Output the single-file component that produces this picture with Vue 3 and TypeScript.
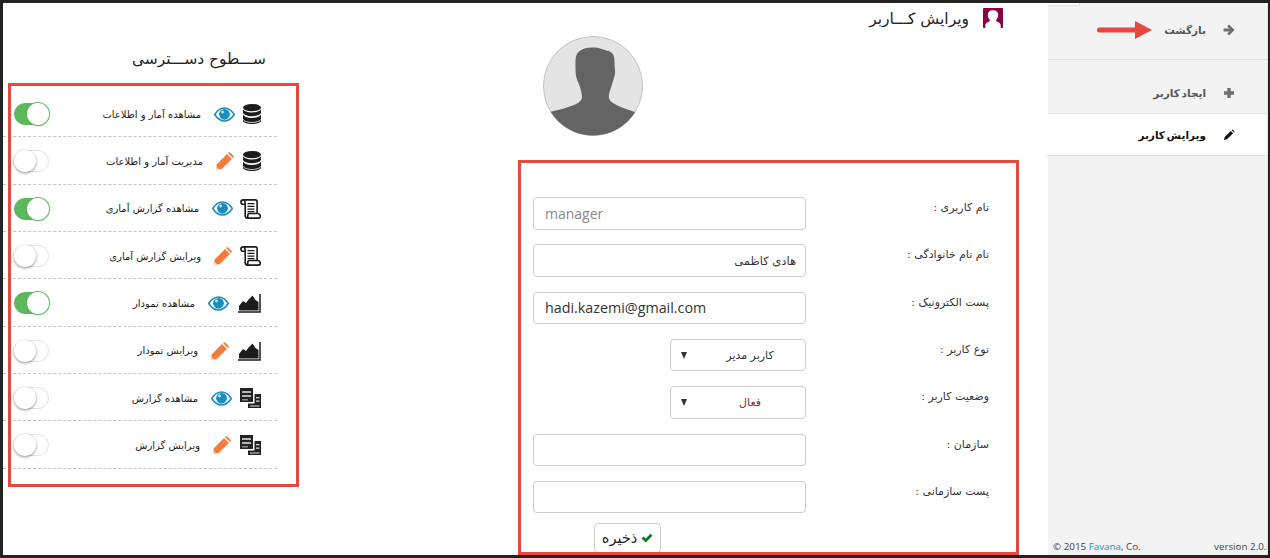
<script setup lang="ts">
type Act = 'view' | 'edit'
type Res = 'db' | 'scroll' | 'chart' | 'files'
interface Perm { label: string; act: Act; res: Res; on: boolean; gap: number }

const perms: Perm[] = [
  { label: 'مشاهده آمار و اطلاعات', act: 'view', res: 'db', on: true, gap: 8 },
  { label: 'مدیریت آمار و اطلاعات', act: 'edit', res: 'db', on: false, gap: 9 },
  { label: 'مشاهده گزارش آماری', act: 'view', res: 'scroll', on: true, gap: 7 },
  { label: 'ویرایش گزارش آماری', act: 'edit', res: 'scroll', on: false, gap: 8 },
  { label: 'مشاهده تمودار', act: 'view', res: 'chart', on: true, gap: 9 },
  { label: 'ویرایش تمودار', act: 'edit', res: 'chart', on: false, gap: 9 },
  { label: 'مشاهده گزارش', act: 'view', res: 'files', on: false, gap: 8 },
  { label: 'ویرایش گزارش', act: 'edit', res: 'files', on: false, gap: 9 },
]
</script>

<template>
  <div class="frame" dir="rtl">
    <aside class="side">
      <div class="tab"></div>
      <a class="nav nav-back">
        <svg class="nav-ico" viewBox="0 0 12 12"><path d="M6 .6 11.600 6 6 11.400 4.200 9.600 6.500 7.600H.5V4.400h6L4.200 2.400z" fill="#6f6f6f"/></svg>
        <span>بازگشت</span>
      </a>
      <a class="nav nav-new">
        <svg class="nav-ico" viewBox="0 0 12 12"><path d="M4.300 1h3.400v3.300H11v3.400H7.700V11H4.300V7.700H1V4.300h3.300z" fill="#6f6f6f"/></svg>
        <span>ایجاد کاربر</span>
      </a>
      <a class="nav nav-active">
        <svg class="nav-ico" viewBox="0 0 12 12"><path d="M1 11l.7-3L7.800 1.900 10.100 4.200 4 10.300zM8.600 1.100l.9-.7 2.100 2.100-.7.900z" fill="#111"/></svg>
        <span>ویرایش کاربر</span>
      </a>
      <div class="side-foot" dir="ltr">
        <span>© 2015 <em>Favana</em>, Co.</span>
        <span class="ver">version 2.0.8</span>
      </div>
    </aside>

    <main class="main">
      <header class="title">
        <svg class="title-ico" viewBox="0 0 20 20">
          <rect width="20" height="20" rx="1" fill="#8a0045"/>
          <path d="M10 2.200c3.400 0 5.200 1.900 5.200 4.900 0 2.100-.9 3.800-2 4.900-.3 1.100.6 1.700 2 2.300 1.600.6 2.500 1.900 2.500 3.400v2.300H2.300v-2.300c0-1.500.9-2.800 2.500-3.400 1.400-.6 2.300-1.200 2-2.300-1.100-1.100-2-2.800-2-4.900 0-3 1.800-4.900 5.200-4.900z" fill="#fff"/>
        </svg>
        <h1>ویرایش کـــاربر</h1>
      </header>

      <svg class="avatar" viewBox="0 0 100 100">
        <defs><clipPath id="av"><circle cx="50" cy="50" r="49.500"/></clipPath></defs>
        <circle cx="50" cy="50" r="49.500" fill="#e4e4e4" stroke="#c2c2c2"/>
        <path clip-path="url(#av)" d="M50 11.400C58 11.400 60 14 66 15 71 17 71.500 22 71.500 27 71.500 32 72.500 36 72 38 70.500 44 69 48 67.500 53 65 60 65 64 70 67 76 71 84 73 92 76L100 100H0L7 76C14 74 24 72 31 69 36 67 39 64 39 61 38.500 55 37 50 35 46 33 41 32.500 38 32.500 32 32.500 24 32 19 36 15.500 40 12 45 11.400 50 11.400z" fill="#646464"/>
      </svg>

      <form class="form" @submit.prevent>
        <label class="row"><span class="lab">نام کاربری :</span>
          <input class="ctl ltr muted" dir="ltr" value="manager" readonly /></label>
        <label class="row"><span class="lab">نام نام خانوادگی :</span>
          <input class="ctl" value="هادی کاظمی" /></label>
        <label class="row"><span class="lab">پست الکترونیک :</span>
          <input class="ctl ltr" dir="ltr" value="hadi.kazemi@gmail.com" /></label>
        <label class="row"><span class="lab">نوع کاربر :</span>
          <span class="sel"><select class="ctl short"><option>کاربر مدیر</option></select><i class="tri"></i></span></label>
        <label class="row"><span class="lab">وضعیت کاربر :</span>
          <span class="sel"><select class="ctl short red"><option>فعال</option></select><i class="tri"></i></span></label>
        <label class="row"><span class="lab">سازمان :</span>
          <input class="ctl" /></label>
        <label class="row"><span class="lab">پست سازمانی :</span>
          <input class="ctl" /></label>
        <div class="actions">
          <button type="submit" class="save">
            <svg viewBox="0 0 12 10" class="check"><path d="M.5 5.500 2.500 3.500 4.700 5.600 9.500.8 11.500 2.800 4.700 9.400z" fill="#0d7d1f"/></svg>
            <span>ذخیره</span>
          </button>
        </div>
      </form>
    </main>

    <section class="perms">
      <h2>ســـطوح دســـترسی</h2>
      <ul>
        <li v-for="p in perms" :key="p.label" class="perm">
          <svg v-if="p.res === 'db'" class="res w18" viewBox="0 0 18 20">
            <ellipse cx="9" cy="3.600" rx="9" ry="3.600" fill="#1c1c1c"/>
            <path d="M0 5.300c1 2 5 3.200 9 3.200s8-1.200 9-3.200v3.700c-1 2-5 3.200-9 3.200S1 11 0 9zM0 10.700c1 2 5 3.200 9 3.200s8-1.200 9-3.200v5.800c0 2-4 3.500-9 3.500s-9-1.500-9-3.500z" fill="#1c1c1c"/>
            <path d="M0 15.300c1 2 5 3.200 9 3.200s8-1.200 9-3.200" fill="none" stroke="#fff" stroke-width=".8"/>
          </svg>
          <svg v-else-if="p.res === 'scroll'" class="res w21" viewBox="0 0 21 20">
            <path d="M3.500 .9h12c1.200 0 1.600 1 1.600 2v11.600M3.500 .9C2 .9.900 1.900.900 3.200s1 2 2.600 2h1.700V16.500c0 1.700 1 2.600 2.300 2.600H18c1.500 0 2.500-1 2.500-2.300-.9-.3-.5-2.300-2.500-2.300H9.300c-1 0-1.500.9-1.500 1.900s-.5 2.600-1.300 2.700M3.500 .9c1.500 0 1.700 1.700 1.700 4.300" fill="none" stroke="#1a1a1a" stroke-width="1.600"/>
            <path d="M7.500 4.700h7M7.500 7.400h7M7.500 10.100h7M7.500 12.700h7" stroke="#1a1a1a" stroke-width="1.300"/>
          </svg>
          <svg v-else-if="p.res === 'chart'" class="res w23" viewBox="0 0 23 20">
            <path d="M0 19h22V1" fill="none" stroke="#1c1c1c" stroke-width="1.500"/>
            <path d="M1 17.500V13l4-5 3 2 3-4 3.500-3.500 3 4.500 3 2v8.500z" fill="#1c1c1c"/>
          </svg>
          <svg v-else class="res w21" viewBox="0 0 21 20">
            <path d="M0 0h13v14H0z" fill="#222"/>
            <path d="M2 3h9v2H2zM2 7h9v2H2z" fill="#b5b5b5"/>
            <path d="M2 11h6v1.500H2z" fill="#8a8a8a"/>
            <path d="M14.500 6H21v14H8v-4.500h6.500z" fill="#222"/>
            <path d="M16 9h3.500v1.200H16zM16 12.500h3.500v1.200H16zM10 17.500h9.500v1H10z" fill="#ddd"/>
          </svg>

          <svg v-if="p.act === 'view'" class="act eye" :style="{ marginRight: p.gap + 'px' }" viewBox="0 0 21 15">
            <path d="M.7 7.500C3.500 3.200 6.800 1 10.500 1s7 2.200 9.800 6.500c-2.800 4.300-6.100 6.500-9.800 6.500S3.500 11.800.7 7.500z" fill="#fff" stroke="#1a8dbf" stroke-width="1.600"/>
            <circle cx="10.500" cy="7.300" r="5.400" fill="#1a8dbf"/>
            <circle cx="8.500" cy="5" r="1.400" fill="#cfe9f5"/>
          </svg>
          <svg v-else class="act pen" :style="{ marginRight: p.gap + 'px' }" viewBox="0 0 18 18">
            <path d="M0 18 .9 12.200 11 2.100 15.900 7 5.800 17.100z" fill="#f57b3d"/>
            <path d="M12 1.100 13.100 0c.8 0 4.900 4 4.900 4.900L16.900 6z" fill="#f57b3d"/>
            <path d="M0 18l.5-3.200L3.200 17.500z" fill="#ffd9c4"/>
          </svg>

          <span class="perm-label">{{ p.label }}</span>

          <span class="sw" :class="{ on: p.on }"><i></i></span>
        </li>
      </ul>
    </section>

    <div class="mark mark-perms"></div>
    <div class="mark mark-form"></div>
    <svg class="mark-arrow" viewBox="0 0 56 20">
      <path d="M2 7.500h36V1l17 9-17 9v-6.500H2c-2.600 0-2.600-5 0-5z" fill="#e8473f"/>
    </svg>
  </div>
</template>

<style>
html, body { margin: 0; height: 558px; overflow: hidden; background: #fff; }
</style>

<style scoped>
* { box-sizing: border-box; }
.frame {
  position: relative;
  display: flex;
  width: 1270px;
  height: 558px;
  border: solid #232323;
  border-width: 3px 2px 3px 3px;
  font-family: "DejaVu Sans", "Noto Sans", sans-serif;
  color: #222;
  overflow: hidden;
}

/* sidebar */
.side {
  position: relative;
  flex: 0 0 220px;
  display: flex;
  flex-direction: column;
  background: #f3f3f3;
  border-right: 1px solid #e7e7e7;
}
.tab {
  position: absolute;
  top: 0;
  left: 0;
  width: 32px;
  height: 3px;
  background: #fff;
  border: solid #ddd;
  border-width: 0 1px 1px 0;
}
.nav {
  display: flex;
  align-items: center;
  padding-right: 33px;
  font-size: 10.5px;
  color: #555;
  border-bottom: 1px solid #e2e2e2;
}
.nav-ico { width: 12px; height: 12px; margin-left: 17px; flex: none; margin-right: -1px; }
.nav-back { height: 57px; padding-bottom: 2px; font-weight: 700; }
.nav-new { height: 54px; padding-top: 12px; font-weight: 700; word-spacing: -2px; }
.nav-active {
  height: 42px;
  background: #fff;
  margin-left: -1px;
  color: #111;
  font-weight: 700;
  padding-top: 1px;
  word-spacing: -2px;
}
.side-foot {
  margin-top: auto;
  display: flex;
  justify-content: space-between;
  padding: 0 0 2px 5px;
  font: 9.8px "Open Sans", sans-serif;
  color: #444;
  white-space: nowrap;
  overflow: hidden;
}
.side-foot em { font-style: normal; color: #1f8fc4; }
.ver { margin-right: -5px; }

/* main */
.main {
  flex: 1;
  display: flex;
  flex-direction: column;
  min-width: 0;
}
.title {
  display: flex;
  align-items: center;
  height: 20px;
  margin: 5px 45px 0 0;
  gap: 14px;
}
.title-ico { width: 20px; height: 20px; flex: none; }
.title h1 { margin: 1px 0 0; font-size: 15.5px; font-weight: 400; color: #222; white-space: nowrap; }
.avatar {
  width: 100px;
  height: 100px;
  margin: 8px 405px 0 0;
  flex: none;
}
.form {
  display: flex;
  flex-direction: column;
  margin: 61px 59px 0 0;
}
.row {
  display: flex;
  height: 47.33px;
}
.lab {
  flex: 0 0 183px;
  font-size: 11px;
  line-height: 18px;
  padding-top: 2px;
  color: #333;
  white-space: nowrap;
}
.ctl {
  width: 273px;
  height: 32.500px;
  border: 1px solid #ccc;
  border-radius: 4px;
  background: #fff;
  padding: 0 9px;
  font-family: "DejaVu Sans", sans-serif;
  font-size: 11.5px;
  color: #333;
  outline: none;
}
.ltr { font: 14.3px "Open Sans", sans-serif; text-align: left; color: #333; padding: 0 11px; }
.muted { color: #888; font-size: 14px; }
.sel { position: relative; display: block; height: 32.500px; }
.short {
  width: 136px;
  appearance: none;
  text-align-last: center;
  padding: 0 0 0 24px;
  font-size: 11px;
}
.red { color: #8c2a22; }
.tri {
  position: absolute;
  left: 11px;
  top: 13px;
  border: solid transparent;
  border-width: 7px 3.500px 0;
  border-top-color: #333;
}
.actions { display: flex; padding-right: 328px; margin-top: -5px; }
.save {
  display: flex;
  align-items: center;
  justify-content: center;
  gap: 4px;
  width: 67px;
  height: 30px;
  padding: 0;
  background: #fff;
  border: 1px solid #ccc;
  border-radius: 4px;
  font-family: "DejaVu Sans", sans-serif;
  font-size: 14.5px;
  color: #222;
}
.check { width: 12px; height: 10px; flex: none; }

/* permissions */
.perms {
  flex: 0 0 274px;
  display: flex;
  flex-direction: column;
}
.perms h2 {
  margin: 46px 11px 0 0;
  height: 20px;
  font-size: 15.4px;
  line-height: 20px;
  font-weight: 400;
  color: #222;
  white-space: nowrap;
}
.perms ul {
  list-style: none;
  margin: 21px 0 0;
  padding: 0;
}
.perm {
  display: flex;
  align-items: center;
  height: 47.33px;
  padding: 2px 16px 0 0;
  border-bottom: 1px dashed #c6c6c6;
}
.res { height: 20px; flex: none; }
.w18 { width: 18px; }
.w21 { width: 21px; }
.w23 { width: 23px; }
.act { flex: none; }
.eye { width: 21px; height: 15px; }
.pen { width: 18px; height: 18px; }
.perm-label {
  margin-right: 13px;
  font-size: 10px;
  white-space: nowrap;
  color: #222;
}
.sw {
  margin-right: auto;
  margin-left: 11px;
  position: relative;
  width: 35px;
  height: 22px;
  border-radius: 11px;
  background: #fff;
  border: 1px solid #e2e2e2;
  flex: none;
}
.sw i {
  position: absolute;
  left: -1px;
  top: -1px;
  width: 22px;
  height: 22px;
  border-radius: 50%;
  background: #fff;
  box-shadow: 0 1px 3px rgba(0, 0, 0, .45);
}
.sw.on { background: #5cb85c; border-color: #5cb85c; }
.sw.on i { left: auto; right: -1px; box-shadow: 0 0 0 1px #5cb85c, 0 1px 2px rgba(0, 0, 0, .2); }

/* annotations drawn over the page */
.mark {
  position: absolute;
  border: 3px solid #e8473f;
  pointer-events: none;
}
.mark-perms { left: 5px; top: 80px; width: 291px; height: 404px; }
.mark-form { left: 515px; top: 157px; width: 501px; height: 395px; }
.mark-arrow {
  position: absolute;
  left: 1094px;
  top: 17px;
  width: 56px;
  height: 20px;
}
</style>
